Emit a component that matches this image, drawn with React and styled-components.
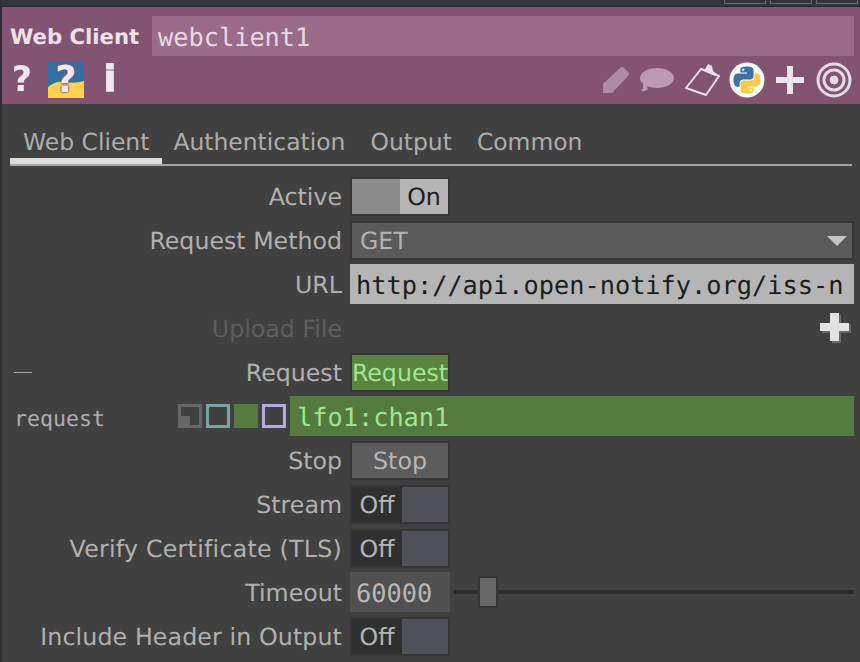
import React from "react";
import styled, { createGlobalStyle } from "styled-components";

const SANS = `"DejaVu Sans", "Liberation Sans", sans-serif`;
const MONO = `"DejaVu Sans Mono", "Liberation Mono", monospace`;

const GlobalStyle = createGlobalStyle`
  html, body {
    margin: 0;
    background: #404040;
    text-rendering: geometricPrecision;
  }
`;

const Page = styled.div`
  background: #404040;
  border-left: 2px solid #2b2e33;
  box-sizing: border-box;
  font-family: ${SANS};
  height: 662px;
  overflow: hidden;
  width: 860px;
`;

const TopStrip = styled.div`
  background: #32353b;
  border-bottom: 1px solid #26282c;
  box-sizing: border-box;
  display: flex;
  gap: 4px;
  height: 7px;
  justify-content: flex-end;
  margin-left: -2px;
  padding-right: 2px;
`;
const StripButton = styled.div`
  border: 1px solid #6a6d72;
  border-top: 0;
  box-sizing: border-box;
  height: 4px;
  width: 42px;
`;

const Header = styled.header`
  background: #835372;
  box-sizing: border-box;
  height: 97px;
  padding-top: 9px;
`;
const TitleRow = styled.div`
  align-items: center;
  display: flex;
  height: 40px;
  padding-left: 8px;
  padding-right: 6px;
`;
const TitleText = styled.div`
  color: #ebe5e9;
  font-size: 21.2px;
  font-weight: 700;
  padding-top: 1px;
  width: 142px;
`;
const NameField = styled.div`
  align-items: center;
  background: #9b6b8a;
  box-sizing: border-box;
  color: #e3dbe0;
  display: flex;
  flex: 1;
  font-family: ${MONO};
  font-size: 25.3px;
  height: 40px;
  padding-left: 6px;
  padding-top: 2px;
`;
const IconRow = styled.div`
  align-items: center;
  display: flex;
  height: 36px;
  justify-content: space-between;
  margin-top: 6px;
`;
const IconGroup = styled.div`
  align-items: center;
  display: flex;
`;
const IconSlot = styled.div`
  align-items: center;
  display: flex;
  filter: blur(0.4px);
  height: 36px;
  justify-content: center;
  width: ${(p) => p.$width}px;
`;
const HelpGlyph = styled.span`
  color: #efe8ec;
  filter: blur(0.6px);
  font-family: ${SANS};
  font-size: ${(p) => p.$size || 35}px;
  font-weight: 700;
  line-height: 36px;
  -webkit-text-stroke: ${(p) => p.$stroke || 0}px #efe8ec;
`;
const PythonHelp = styled.div`
  align-items: center;
  display: flex;
  height: 36px;
  justify-content: center;
  position: relative;
  width: 36px;
`;
const PythonHelpBack = styled.svg`
  display: block;
  left: 0;
  position: absolute;
  top: 0;
`;
const PythonHelpGlyph = styled(HelpGlyph)`
  font-size: 37px;
  position: relative;
  text-shadow: 0 0 2px #835372, 0 0 2px #835372, 0 0 2px #835372;
`;

const TabBar = styled.nav`
  border-bottom: 2px solid #a6a6a6;
  box-sizing: border-box;
  display: flex;
  height: 62px;
  margin: 0 8px 8px 8px;
  padding-top: 20px;
`;
const Tab = styled.div`
  border-bottom: ${(p) => (p.$active ? "6px solid #dcdcdc" : "0")};
  box-sizing: content-box;
  color: #adadad;
  font-size: 23.45px;
  height: 34px;
  line-height: 36px;
  margin-bottom: ${(p) => (p.$active ? "-2px" : "0")};
  margin-right: ${(p) => p.$gap}px;
  padding: ${(p) => (p.$active ? "0 13px" : "0")};
`;

const Row = styled.div`
  align-items: center;
  display: flex;
  height: 44px;
  padding-right: 6px;
`;
const Label = styled.div`
  align-items: center;
  box-sizing: border-box;
  color: ${(p) => (p.$dim ? "#5d5d5d" : "#b0b0b0")};
  display: flex;
  flex: none;
  font-size: 23.7px;
  justify-content: ${(p) => (p.$dash ? "space-between" : "flex-end")};
  letter-spacing: ${(p) => p.$track || 0}px;
  margin-right: 8px;
  padding-left: ${(p) => (p.$dash ? "12px" : "0")};
  padding-top: 2px;
  width: 340px;
`;
const Dash = styled.span`
  background: #a8a8a8;
  height: 1px;
  margin-bottom: 2px;
  width: 18px;
`;

const Toggle = styled.div`
  border: 2px solid #363636;
  box-sizing: border-box;
  display: flex;
  font-size: 23.7px;
  height: 39px;
  width: 100px;
`;
const TogglePart = styled.div`
  align-items: center;
  background: ${(p) => p.$bg};
  box-sizing: border-box;
  color: ${(p) => p.$color || "#b5b5b5"};
  display: flex;
  flex: ${(p) => (p.$grow ? "1" : "none")};
  justify-content: center;
  padding-top: 2px;
  width: ${(p) => p.$width || 48}px;
`;

const Select = styled.div`
  align-items: center;
  background: #5a5a5a;
  border: 2px solid #363636;
  box-sizing: border-box;
  color: #b2b2b2;
  display: flex;
  flex: 1;
  font-size: 23.7px;
  height: 39px;
  justify-content: space-between;
  padding: 2px 5px 0 8px;
`;
const Caret = styled.span`
  border-left: 10px solid transparent;
  border-right: 10px solid transparent;
  border-top: 10px solid #c4c4c4;
  height: 0;
  width: 0;
`;

const TextField = styled.div`
  align-items: center;
  background: #b5b5b5;
  box-sizing: border-box;
  color: #1c1c1c;
  display: flex;
  flex: 1;
  font-family: ${MONO};
  font-size: 25.3px;
  height: 40px;
  padding-left: 6px;
  padding-top: 2px;
  white-space: nowrap;
`;

const Spacer = styled.div`
  flex: 1;
`;
const AddIcon = styled.svg`
  display: block;
  margin-right: 3px;
`;

const Button = styled.div`
  align-items: center;
  background: ${(p) => (p.$on ? "#598540" : "#5c5c5c")};
  border: 2px solid #363636;
  box-sizing: border-box;
  color: ${(p) => (p.$on ? "#9fe68f" : "#b5b5b5")};
  display: flex;
  font-size: 23.7px;
  height: 39px;
  justify-content: center;
  padding-top: 2px;
  width: 100px;
`;

const ExpressionName = styled.div`
  color: #aeaeae;
  flex: 1;
  font-family: ${MONO};
  font-size: 21.6px;
  padding-left: 12px;
  padding-top: 6px;
`;
const ModeGroup = styled.div`
  display: flex;
  gap: 4px;
  margin-right: 4px;
`;
const ModeSquare = styled.div`
  background: ${(p) => p.$fill || "transparent"};
  border: 3px solid ${(p) => p.$color};
  box-sizing: border-box;
  height: 24px;
  width: 24px;
`;
const CornerSquare = styled(ModeSquare)`
  position: relative;
  &::after {
    background: #666666;
    bottom: 0;
    content: "";
    height: 9px;
    left: 0;
    position: absolute;
    width: 9px;
  }
`;
const ExpressionField = styled.div`
  align-items: center;
  background: #557a3f;
  box-sizing: border-box;
  color: #9de58e;
  display: flex;
  font-family: ${MONO};
  font-size: 25.3px;
  height: 40px;
  padding-left: 7px;
  padding-top: 2px;
  width: 564px;
`;

const NumberField = styled.div`
  align-items: center;
  background: #505050;
  box-sizing: border-box;
  color: #b8b8b8;
  display: flex;
  font-family: ${MONO};
  font-size: 25.3px;
  height: 40px;
  padding-left: 6px;
  padding-top: 2px;
  width: 100px;
`;
const Slider = styled.div`
  flex: 1;
  height: 32px;
  margin-left: 4px;
  position: relative;
  &::before {
    background: #2c2c2c;
    content: "";
    height: 4px;
    left: 0;
    position: absolute;
    right: 0;
    top: 14px;
  }
`;
const SliderHandle = styled.div`
  background: #676767;
  border: 2px solid #363636;
  box-sizing: border-box;
  height: 32px;
  left: 24px;
  position: absolute;
  top: 0;
  width: 20px;
`;

const Pencil = () => (
  <svg width="28" height="28" viewBox="0 0 28 28">
    <path d="M1 27 L1 18 L18 2 Q20 0 22 2 L26 6 Q28 8 26 10 L10 27 Z" fill="#b08ba6" />
  </svg>
);

const Bubble = () => (
  <svg width="36" height="24" viewBox="0 0 36 24">
    <ellipse cx="18" cy="10" rx="17" ry="10" fill="#bb9ab2" />
    <path d="M7 15 L9 21 Q6 24 2 23 Q5 21 4 14 Z" fill="#bb9ab2" />
  </svg>
);

const Clipboard = () => (
  <svg width="36" height="34" viewBox="0 0 36 34">
    <path d="M16 6 L1 25 L21 32 L34 13 Z" fill="none" stroke="#ebe1e8" strokeWidth="2" strokeLinejoin="round" />
    <path d="M19 8 L23 1 L27 3 L28 8 L32 11 L30 13 Z" fill="#ebe1e8" />
  </svg>
);

const PythonLogo = () => (
  <svg width="36" height="36" viewBox="0 0 36 36">
    <circle cx="18" cy="18" r="17.5" fill="#ffffff" />
    <g transform="translate(4.5 4.5) scale(1.125)">
      <path
        fill="#3a72a2"
        d="M14.25.18l.9.2.73.26.59.3.45.32.34.34.25.34.16.33.1.3.04.26.02.2-.01.13V8.5l-.05.63-.13.55-.21.46-.26.38-.3.31-.33.25-.35.19-.35.14-.33.1-.3.07-.26.04-.21.02H8.77l-.69.05-.59.14-.5.22-.41.27-.33.32-.27.35-.2.36-.15.37-.1.35-.07.32-.04.27-.02.21v3.06H3.17l-.21-.03-.28-.07-.32-.12-.35-.18-.36-.26-.36-.36-.35-.46-.32-.59-.28-.73-.21-.88-.14-1.05-.05-1.23.06-1.22.16-1.04.24-.87.32-.71.36-.57.4-.44.42-.33.42-.24.4-.16.36-.1.32-.05.24-.01h.16l.06.01h8.16v-.83H6.18l-.01-2.75-.02-.37.05-.34.11-.31.17-.28.25-.26.31-.23.38-.2.44-.18.51-.15.58-.12.64-.1.71-.06.77-.04.84-.02 1.27.05zm-6.3 1.98l-.23.33-.08.41.08.41.23.34.33.22.41.09.41-.09.33-.22.23-.34.08-.41-.08-.41-.23-.33-.33-.22-.41-.09-.41.09z"
      />
      <path
        fill="#fbcb45"
        d="M21.04 6.11l.28.06.32.12.35.18.36.27.36.35.35.47.32.59.28.73.21.88.14 1.04.05 1.23-.06 1.23-.16 1.04-.24.86-.32.71-.36.57-.4.45-.42.33-.42.24-.4.16-.36.09-.32.05-.24.02-.16-.01h-8.22v.82h5.84l.01 2.76.02.36-.05.34-.11.31-.17.29-.25.25-.31.24-.38.2-.44.17-.51.15-.58.13-.64.09-.71.07-.77.04-.84.01-1.27-.04-1.07-.14-.9-.2-.73-.25-.59-.3-.45-.33-.34-.34-.25-.34-.16-.33-.1-.3-.04-.25-.02-.2.01-.13v-5.34l.05-.64.13-.54.21-.46.26-.38.3-.32.33-.24.35-.2.35-.14.33-.1.3-.06.26-.04.21-.02.13-.01h5.84l.69-.05.59-.14.5-.21.41-.28.33-.32.27-.35.2-.36.15-.36.1-.35.07-.32.04-.28.02-.21V6.07h2.09l.14.01zm-6.47 14.25l-.23.33-.08.41.08.41.23.33.33.23.41.08.41-.08.33-.23.23-.33.08-.41-.08-.41-.23-.33-.33-.23-.41-.08-.41.08z"
      />
    </g>
  </svg>
);

const PlusIcon = () => (
  <svg width="28" height="28" viewBox="0 0 28 28">
    <path d="M11 0 H17 V11 H28 V17 H17 V28 H11 V17 H0 V11 H11 Z" fill="#ece6ea" />
  </svg>
);

const TargetIcon = () => (
  <svg width="36" height="36" viewBox="0 0 36 36" fill="none" stroke="#e6dce3">
    <circle cx="18" cy="18" r="16" strokeWidth="3" />
    <circle cx="18" cy="18" r="10" strokeWidth="3" />
    <circle cx="18" cy="18" r="4" fill="#e6dce3" strokeWidth="1" />
  </svg>
);

const OnOff = ({ on }) =>
  on ? (
    <Toggle>
      <TogglePart $bg="#8c8c8c" />
      <TogglePart $bg="#b5b5b5" $color="#1c1c1c" $grow>On</TogglePart>
    </Toggle>
  ) : (
    <Toggle>
      <TogglePart $bg="#2f2f2f" $width={50}>Off</TogglePart>
      <TogglePart $bg="#50505a" $grow />
    </Toggle>
  );

const App = () => (
  <Page>
    <GlobalStyle />
    <TopStrip>
      <StripButton />
      <StripButton />
      <StripButton />
    </TopStrip>
    <Header>
      <TitleRow>
        <TitleText>Web Client</TitleText>
        <NameField>webclient1</NameField>
      </TitleRow>
      <IconRow>
        <IconGroup>
          <IconSlot $width={40}><HelpGlyph>?</HelpGlyph></IconSlot>
          <IconSlot $width={48}>
            <PythonHelp>
              <PythonHelpBack width="36" height="36" viewBox="0 0 36 36">
                <rect width="36" height="36" fill="#33709f" />
                <path d="M0 25 Q9 18 18 20 T36 19 V36 H0 Z" fill="#fdd24f" />
              </PythonHelpBack>
              <PythonHelpGlyph>?</PythonHelpGlyph>
            </PythonHelp>
          </IconSlot>
          <IconSlot $width={40}><HelpGlyph $size={36} $stroke={1.5}>i</HelpGlyph></IconSlot>
        </IconGroup>
        <IconGroup>
          <IconSlot $width={36}><Pencil /></IconSlot>
          <IconSlot $width={46}><Bubble /></IconSlot>
          <IconSlot $width={45}><Clipboard /></IconSlot>
          <IconSlot $width={44}><PythonLogo /></IconSlot>
          <IconSlot $width={42}><PlusIcon /></IconSlot>
          <IconSlot $width={45}><TargetIcon /></IconSlot>
          <IconSlot $width={4} />
        </IconGroup>
      </IconRow>
    </Header>
    <TabBar>
      <Tab $active $gap={11}>Web Client</Tab>
      <Tab $gap={25}>Authentication</Tab>
      <Tab $gap={25}>Output</Tab>
      <Tab $gap={0}>Common</Tab>
    </TabBar>

    <Row>
      <Label>Active</Label>
      <OnOff on />
    </Row>
    <Row>
      <Label>Request Method</Label>
      <Select>GET<Caret /></Select>
    </Row>
    <Row>
      <Label>URL</Label>
      <TextField>http://api.open-notify.org/iss-n</TextField>
    </Row>
    <Row>
      <Label $dim>Upload File</Label>
      <Spacer />
      <AddIcon width="31" height="30" viewBox="0 0 31 30">
        <path d="M12 2 H21 V11 H31 V20 H21 V30 H12 V20 H2 V11 H12 Z" fill="#6a6a6a" />
        <path d="M10 0 H19 V10 H29 V18 H19 V28 H10 V18 H0 V10 H10 Z" fill="#e2e2e2" />
      </AddIcon>
    </Row>
    <Row>
      <Label $dash><Dash />Request</Label>
      <Button $on>Request</Button>
    </Row>
    <Row>
      <ExpressionName>request</ExpressionName>
      <ModeGroup>
        <CornerSquare $color="#666666" />
        <ModeSquare $color="#76a5a5" />
        <ModeSquare $color="#557a3f" $fill="#557a3f" />
        <ModeSquare $color="#b5a8e6" />
      </ModeGroup>
      <ExpressionField>lfo1:chan1</ExpressionField>
    </Row>
    <Row>
      <Label>Stop</Label>
      <Button>Stop</Button>
    </Row>
    <Row>
      <Label>Stream</Label>
      <OnOff />
    </Row>
    <Row>
      <Label $track={0.25}>Verify Certificate (TLS)</Label>
      <OnOff />
    </Row>
    <Row>
      <Label>Timeout</Label>
      <NumberField>60000</NumberField>
      <Slider><SliderHandle /></Slider>
    </Row>
    <Row>
      <Label $track={0.12}>Include Header in Output</Label>
      <OnOff />
    </Row>
  </Page>
);

export default App;
